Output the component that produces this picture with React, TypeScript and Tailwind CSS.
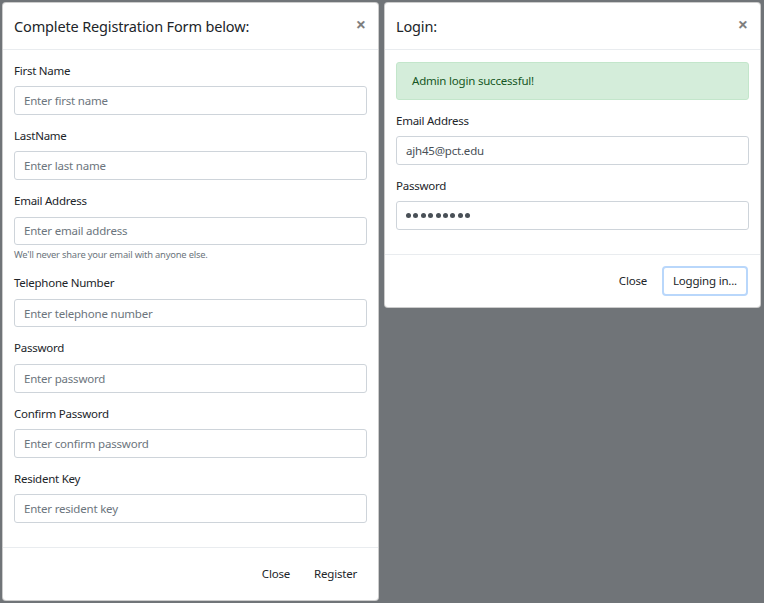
const font = { fontFamily: '"Noto Sans", "Open Sans", Arial, sans-serif' }

function CloseX() {
  return (
    <button className="text-[18px] leading-none font-bold text-black opacity-50 -mt-[3px]">
      ×
    </button>
  )
}

function Field({
  label,
  placeholder,
  value,
  help,
}: {
  label: string
  placeholder?: string
  value?: string
  help?: string
}) {
  return (
    <div className="mb-[12px]">
      <label className="block text-[11.5px] tracking-[-0.25px] leading-[18.7px] mb-[6px] text-[#212529]">{label}</label>
      <input
        type="text"
        readOnly
        placeholder={placeholder}
        value={value}
        className="block w-full h-[28.5px] px-[9px] text-[11.5px] tracking-[-0.2px] text-[#495057] placeholder:text-[#6c757d] bg-white border border-[#ced4da] rounded-[3px] outline-none"
        style={font}
      />
      {help && (
        <small className="block mt-[3px] text-[9.4px] tracking-[-0.2px] leading-[14px] text-[#6c757d]">{help}</small>
      )}
    </div>
  )
}

function PasswordField({ label, length }: { label: string; length: number }) {
  return (
    <div className="mb-[12px]">
      <label className="block text-[11.5px] tracking-[-0.25px] leading-[18.7px] mb-[6px] text-[#212529]">{label}</label>
      <div className="flex items-center gap-[2.4px] w-full h-[28.5px] px-[9px] bg-white border border-[#ced4da] rounded-[3px]">
        {Array.from({ length }).map((_, i) => (
          <span key={i} className="w-[5px] h-[5px] rounded-full bg-[#495057]" />
        ))}
      </div>
    </div>
  )
}

function ModalHeader({ title }: { title: string }) {
  return (
    <div className="flex items-center justify-between pl-[11px] pr-[12px] h-[46.5px] border-b border-[#e9ecef]">
      <h5 className="text-[14.5px] tracking-[-0.15px] leading-[22.5px] text-[#212529]">{title}</h5>
      <CloseX />
    </div>
  )
}

function FooterButton({ children }: { children: React.ReactNode }) {
  return (
    <button className="px-[9px] h-[28.5px] text-[11.5px] tracking-[-0.2px] text-[#212529] rounded-[3px]">
      {children}
    </button>
  )
}

export default function App() {
  return (
    <div className="min-h-screen w-full bg-[#707478] flex items-start gap-[5px] pl-[2px] pt-[2px]" style={font}>
      {/* Registration modal */}
      <div className="w-[377px] bg-white rounded-[4px] border border-black/20 overflow-hidden">
        <ModalHeader title="Complete Registration Form below:" />
        <div className="py-[12px] px-[11px]">
          <Field label="First Name" placeholder="Enter first name" />
          <Field label="LastName" placeholder="Enter last name" />
          <Field
            label="Email Address"
            placeholder="Enter email address"
            help="We'll never share your email with anyone else."
          />
          <Field label="Telephone Number" placeholder="Enter telephone number" />
          <Field label="Password" placeholder="Enter password" />
          <Field label="Confirm Password" placeholder="Enter confirm password" />
          <Field label="Resident Key" placeholder="Enter resident key" />
        </div>
        <div className="flex items-center justify-end gap-[6px] pr-[12px] border-t border-[#e9ecef] h-[53px]">
          <FooterButton>Close</FooterButton>
          <FooterButton>Register</FooterButton>
        </div>
      </div>

      {/* Login modal */}
      <div className="w-[377px] bg-white rounded-[4px] border border-black/20 overflow-hidden">
        <ModalHeader title="Login:" />
        <div className="py-[12px] px-[11px]">
          <div className="mb-[12px] h-[38px] flex items-center px-[15px] bg-[#d4edda] border border-[#c3e6cb] rounded-[3px] text-[11.5px] tracking-[-0.2px] text-[#155724]">
            Admin login successful!
          </div>
          <Field label="Email Address" value="ajh45@pct.edu" />
          <PasswordField label="Password" length={9} />
        </div>
        <div className="flex items-center justify-end gap-[6px] pr-[12px] border-t border-[#e9ecef] h-[53px]">
          <FooterButton>Close</FooterButton>
          <button className="px-[9px] h-[30px] text-[11.5px] tracking-[-0.2px] text-[#212529] rounded-[4px] border-2 border-[#b9d7fb]">
            Logging in...
          </button>
        </div>
      </div>
    </div>
  )
}
